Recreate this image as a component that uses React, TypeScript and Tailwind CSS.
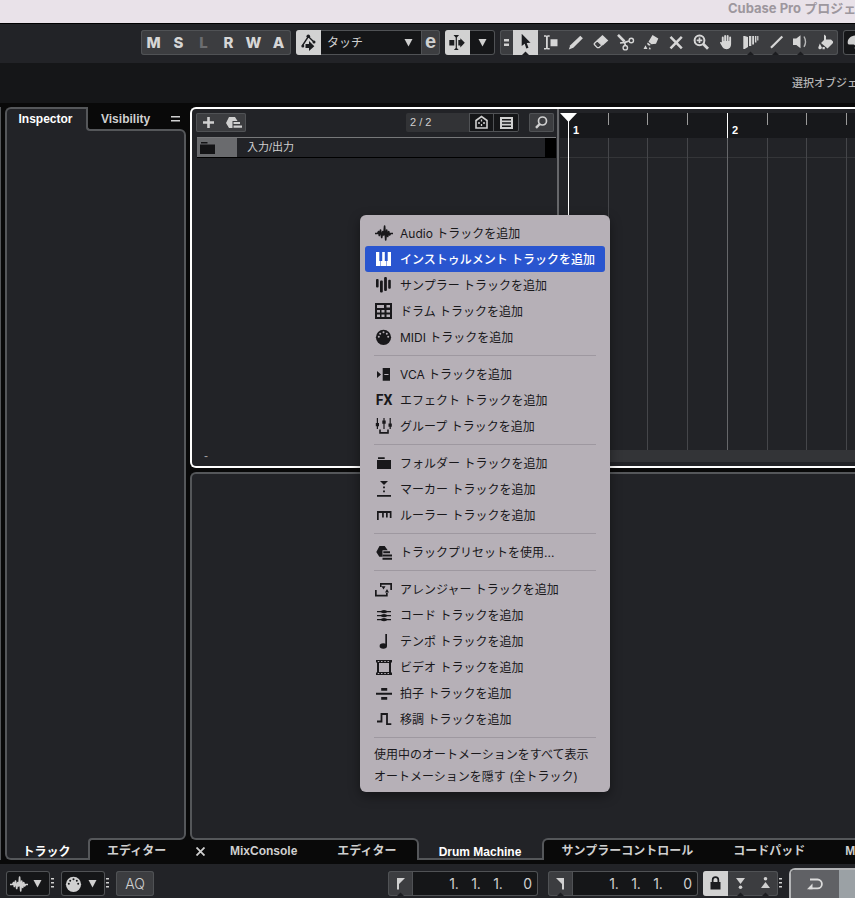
import { ReactNode, useState } from "react";
import clsx from "clsx";

type IconProps = { children: ReactNode; className?: string };

// 25px square glyph used on the tool bars
function ToolIcon({ children, className }: IconProps) {
  return (
    <svg viewBox="0 0 25 25" className={clsx("h-[25px] w-[25px] shrink-0", className)} fill="currentColor" aria-hidden="true">
      {children}
    </svg>
  );
}

// 20x18 glyph used in the context menu
function MenuIcon({ children }: IconProps) {
  return (
    <svg viewBox="0 0 20 18" className="h-[18px] w-5 shrink-0" fill="currentColor" aria-hidden="true">
      {children}
    </svg>
  );
}

function Caret() {
  return (
    <svg viewBox="0 0 9 9" className="h-[9px] w-[9px] shrink-0 pointer-events-none" fill="currentColor" aria-hidden="true">
      <path d="M.5 1h8L4.5 8.500z" />
    </svg>
  );
}

function Handle() {
  return (
    <svg viewBox="0 0 11 25" className="h-[25px] w-[11px] shrink-0 text-[#d0d0d0]" fill="currentColor" aria-hidden="true">
      <path d="M1 7h3v1.500H1zM1 11h3v1.500H1zM1 15h3v1.500H1z" />
    </svg>
  );
}

function Wave() {
  return (
    <path
      d="M1 9.500H3.500L4.500 7.500 5.300 11.500 6.500 6 7.700 13.500 8.800 7.500 9.700 11 10.600 2 11.700 16 12.700 6 13.700 12.500 14.700 7.500 15.600 11 16.500 9.500H19"
      fill="none"
      stroke="currentColor"
      strokeWidth="1.600"
      strokeLinejoin="round"
    />
  );
}

const NOTCH = <path d="M12.500 21.500 16 25H9z" className="text-[#1c1d20]" />;

const TOOLS: { name: string; icon: ReactNode }[] = [
  { name: "Object Selection", icon: <><path d="M8.700 3.700V16l3-2.300 1.600 4.800 2.200-.8-1.800-4.600 3.800-.4z" />{NOTCH}</> },
  { name: "Range Selection", icon: <path d="M6 5.300h2.200l.7.600.7-.6h2.100v1.500H9.800v11.200h1.900v1.600H9.600l-.7-.6-.7.600H6V18h2V6.800H6zM12.500 9.300h7v7h-7z" /> },
  { name: "Draw", icon: <path d="M17.300 5.800 19.900 8.200 10.300 17.800 5.800 19.500 7.300 15.300z" /> },
  { name: "Erase", icon: <><path d="M14.500 5 20.300 10.500 14.800 15.500 9 10z" /><path d="M9.300 10.700 13.800 15 11 17.700H9.300L6.300 14.500V13.500z" fill="none" stroke="currentColor" strokeWidth="1.300" /></> },
  { name: "Split", icon: <g fill="none" stroke="currentColor"><path d="M5 4.800 11.500 11.500" strokeWidth="2.600" /><path d="M7 13 12 12.300 16 11M11.500 11.500 12.300 15.500" strokeWidth="1.700" /><circle cx="18.300" cy="10.500" r="2.200" strokeWidth="1.400" /><circle cx="12.300" cy="17.700" r="2.200" strokeWidth="1.400" /></g> },
  { name: "Glue", icon: <path d="M14.500 5 20.300 8.500 18 13.800 13.500 14.300 10.500 11.800zM9.800 12.500 12.800 15 11 15.800 9 14zM7.500 15.200l2 3.800h-4zM11.800 17l1.200 2.300h-2.400z" /> },
  { name: "Mute", icon: <path d="M7.500 6.800 18.800 18.300M18.800 6.800 7.500 18.300" fill="none" stroke="currentColor" strokeWidth="2.500" /> },
  { name: "Zoom", icon: <g fill="none" stroke="currentColor"><circle cx="11.500" cy="10.300" r="4.900" strokeWidth="2" /><path d="M11.500 7.500v5.600M8.700 10.300h5.600" strokeWidth="1.700" /><path d="M15 13.800 20 18.800" strokeWidth="2.900" /></g> },
  { name: "Hand", icon: <path d="M8.800 7.500a.9.900 0 0 1 1.900 0V11h.5V5.700a1 1 0 0 1 1.900 0V11h.6V5.700a1 1 0 0 1 1.900 0V11h.6V7.500a.9.900 0 0 1 1.900 0V14c0 3-1.500 5.200-4.500 5.200-3 0-4-1.800-6.500-6.200-.4-.9.800-1.500 1.500-.7l.2.700z" /> },
  { name: "Comp", icon: <><path d="M5.300 6h1.400l3.300 1v10l-3.300 2H5.300zM11 6h2.300v10H11zM14.200 6h1.800v8.500h-1.800zM16.900 6h1.500v6.500h-1.500zM19.200 6h1.200v4.500h-1.200z" />{NOTCH}</> },
  { name: "Line", icon: <><path d="M8 17.800 19.300 6.500" fill="none" stroke="currentColor" strokeWidth="2.200" />{NOTCH}</> },
  { name: "Play", icon: <><path d="M5 8.500h3.300L12.500 5.300v13L8.300 15H5z" /><path d="M16 6.500q3 5.200 0 10.300" fill="none" stroke="currentColor" strokeWidth="1.400" opacity=".8" />{NOTCH}</> },
  { name: "Color", icon: <path d="M11 4.500 13 6v3.500h5l2 2v1.500l-5.500 5.500L8 13l3-3zM6.800 13.500l2.200 4.200q-1 2-2.500 1.500T5.300 17.500zM9.500 17h2.300v2.300H9.500z" /> },
];

const PRESET = <><path d="M5.500 3h5.200l3 4.300H8.500v6.400H5.300L2.300 9z" /><path d="M9.300 8.300H16v1.900H9.300zM8.500 11.500H18v1.900H8.500zM8.500 14.700H18v2H8.500z" /></>;

type Entry = { label: string; icon?: ReactNode };

const MENU: Entry[][] = [
  [
    { label: "Audio トラックを追加", icon: <MenuIcon><Wave /></MenuIcon> },
    { label: "インストゥルメント トラックを追加", icon: <MenuIcon><path d="M2 2h3.300v9h1.200v5H2zM8.200 2h2.600v9H12v5H7v-5h1.200zM17 2h-3.300v9h-1.200v5H17z" /></MenuIcon> },
    { label: "サンプラー トラックを追加", icon: <MenuIcon><rect x="2" y="3" width="2.600" height="8.500" rx="1" /><rect x="6" y="4.500" width="2.800" height="12" rx="1" /><rect x="10.100" y="1" width="2.800" height="14" rx="1" /><rect x="14.200" y="3.700" width="2.600" height="9" rx="1" /></MenuIcon> },
    { label: "ドラム トラックを追加", icon: <MenuIcon><path fillRule="evenodd" d="M1 1h17v16H1zM3 3v3h7V3zM12.500 3v2.500H16V3zM3 8v2.500h3V8zM7.500 8v2.500h3V8zM12.500 8v2.500H16V8zM3 12.500V15h3v-2.500zM7.500 12.500V15h3v-2.500zM12.500 12.500V15H16v-2.500z" /></MenuIcon> },
    { label: "MIDI トラックを追加", icon: <MenuIcon><MidiPlug hole="#b6b0b7" /></MenuIcon> },
  ],
  [
    { label: "VCA トラックを追加", icon: <MenuIcon><path fillRule="evenodd" d="M3 6 7 9.500 3 13zM8.700 3H16v12.700H8.700zM10.300 9v1h4.200V9z" /></MenuIcon> },
    { label: "エフェクト トラックを追加", icon: <span className="w-5 shrink-0 text-center font-[Roboto,sans-serif] text-sm font-bold">FX</span> },
    { label: "グループ トラックを追加", icon: <MenuIcon><path d="M2.800 1h1.200v11H2.800zM9.400 1h1.200v11H9.400zM15.600 1h1.200v11h-1.200zM1.800 6h3.200v3.300H1.800zM8.300 3.500h3.400v3.300H8.300zM14.500 6.500h3.300v3.300h-3.300zM5.200 12.500h1.600V15h6.400v-2.500h1.600v4.200H5.200z" /></MenuIcon> },
  ],
  [
    { label: "フォルダー トラックを追加", icon: <MenuIcon><path d="M4 3.300h6.700V5H4zM3 6h14v9H3z" /></MenuIcon> },
    { label: "マーカー トラックを追加", icon: <MenuIcon><path d="M6 1h8l-4 4zM9.100 6.500h1.800v1.800H9.100zM9.100 10.500h1.800v1.800H9.100zM3 15h14v1.800H3z" /></MenuIcon> },
    { label: "ルーラー トラックを追加", icon: <MenuIcon><path d="M3 5h14.500v7h-1.700V7h-2.100v4.500H12V7H9.800v4.500H8.100V7H4.700v7H3z" /></MenuIcon> },
  ],
  [{ label: "トラックプリセットを使用...", icon: <MenuIcon>{PRESET}</MenuIcon> }],
  [
    { label: "アレンジャー トラックを追加", icon: <MenuIcon><path d="M6 3h12v7h-1.700V4.700H7.500V7H6zM1 10h1.700v4.800H12V13h1.700v3.500H1zM7.500 6.200h4L9.500 9.500zM11 12.500h4L13 9z" /></MenuIcon> },
    { label: "コード トラックを追加", icon: <MenuIcon><path d="M3 5h14v1.200H3zM3 9h14v1.200H3zM3 13h14v1.200H3z" /><ellipse cx="10" cy="5.600" rx="3" ry="1.700" /><ellipse cx="10" cy="9.600" rx="3" ry="1.700" /><ellipse cx="10" cy="13.600" rx="3" ry="1.700" /></MenuIcon> },
    { label: "テンポ トラックを追加", icon: <MenuIcon><path d="M11.300 2H13v12h-1.700z" /><ellipse cx="9.300" cy="14" rx="3.700" ry="2.700" /></MenuIcon> },
    { label: "ビデオ トラックを追加", icon: <MenuIcon><path fillRule="evenodd" d="M2 2h16v15H2zM5 5v9h10V5zM3.800 3v1h1.500V3zM7 3v1h1.500V3zM10.300 3v1h1.500V3zM13.500 3v1H15V3zM3.800 15v1h1.500v-1zM7 15v1h1.500v-1zM10.300 15v1h1.500v-1zM13.500 15v1H15v-1zM2 4.500v10h1v-10zM17 4.500v10h1v-10z" /></MenuIcon> },
    { label: "拍子 トラックを追加", icon: <MenuIcon><path d="M2 8.800h16v1.900H2zM7.200 4h6v2.700h-6zM7.200 13h6v2.700h-6z" /></MenuIcon> },
    { label: "移調 トラックを追加", icon: <MenuIcon><path d="M3 11.500h4.500V4H13v10.200h4.300" fill="none" stroke="currentColor" strokeWidth="1.800" /></MenuIcon> },
  ],
  [{ label: "使用中のオートメーションをすべて表示" }, { label: "オートメーションを隠す (全トラック)" }],
];

function MidiPlug({ hole }: { hole: string }) {
  return (
    <>
      <circle cx="9.500" cy="9.300" r="7.600" />
      <g fill={hole}>
        <circle cx="4.800" cy="8.800" r="1" />
        <circle cx="6.200" cy="5.700" r="1" />
        <circle cx="9.500" cy="4.300" r="1" />
        <circle cx="12.800" cy="5.700" r="1" />
        <circle cx="14.200" cy="8.800" r="1" />
      </g>
    </>
  );
}

const GROUP = "flex h-[25px] shrink-0 overflow-hidden rounded-[3px] inset-ring inset-ring-[#505255]";

export default function App() {
  return (
    <div className="relative flex h-screen min-h-[640px] flex-col overflow-hidden bg-[#090909] font-['Liberation_Sans','Noto_Sans_CJK_JP',sans-serif] text-xs text-[#d0d0d0]">
      <header className="flex h-6 shrink-0 justify-end overflow-hidden border-b border-black bg-[#e9e2e9]">
        <h1 className="w-[127px] shrink-0 whitespace-nowrap font-[Inter,'Noto_Sans_CJK_JP',sans-serif] text-[13px] leading-4 font-bold text-[#9d979e]">
          Cubase Pro プロジェクト
        </h1>
      </header>
      <Toolbar />
      <div className="flex h-10 shrink-0 items-center justify-end overflow-hidden bg-[#151618]">
        <span className="w-[63px] shrink-0 whitespace-nowrap text-[11px] font-medium text-[#b4b4b4]">選択オブジェクト</span>
      </div>
      <main className="flex min-h-0 flex-1 py-1">
        <div className="mr-1 w-px shrink-0 bg-[#55575a]" />
        <Inspector />
        <div className="flex min-w-0 flex-1 flex-col gap-1">
          <Project />
          <LowerZone />
        </div>
      </main>
      <Transport />
      <TrackMenu />
    </div>
  );
}

function Toolbar() {
  const [tool, setTool] = useState(TOOLS[0].name);
  return (
    <div className="flex h-[39px] shrink-0 items-start gap-[5px] overflow-hidden bg-[#222327] pt-1.5 pl-[141px]">
      <div className={clsx(GROUP, "bg-[#3c3d40]")}>
        {["M", "S", "L", "R", "W", "A"].map((c) => (
          <button key={c} className={clsx("w-[25px] text-center font-[Inter,sans-serif] text-[15px] font-extrabold", c === "L" ? "text-[#6c6d70]" : "text-[#d6d6d6]")}>
            {c}
          </button>
        ))}
      </div>
      <div className={clsx(GROUP, "bg-[#151618]")}>
        <button aria-label="Automation" className="bg-[#d2d2d2] text-[#1c1d20]">
          <ToolIcon>
            <path d="M6.500 15.500 12.300 6.500 18 12" fill="none" stroke="currentColor" strokeWidth="1.400" />
            <circle cx="12.300" cy="6.300" r="1.800" />
            <circle cx="18" cy="12" r="1.500" />
            <circle cx="6.800" cy="16" r="1.500" />
            <path d="M9.500 14h3.500v-3l5.300 5.200L13 21v-3H9.500z" />
          </ToolIcon>
        </button>
        <div className="relative flex w-[100px] items-center justify-end pr-2">
          <select aria-label="オートメーションモード" className="absolute inset-0 w-full appearance-none pl-1.5 text-xs text-[#d0d0d0] outline-none">
            <option>タッチ</option>
          </select>
          <Caret />
        </div>
        <button aria-label="Automation panel" className="w-[19px] rounded-r-[3px] bg-[#3c3d40] pb-1 text-xl leading-5 font-bold inset-ring inset-ring-[#505255]">e</button>
      </div>
      <div className={clsx(GROUP, "bg-[#151618]")}>
        <button aria-label="Auto-scroll" className="bg-[#d2d2d2] text-[#1c1d20]">
          <ToolIcon>
            <path d="M4.300 10h5v5.500h-5zM8.500 5h5.600l-2.200 2.500V18l1.800 2H8.900l1.800-2V7.500zM13.300 10h2V8.200l4.500 4.600-4.500 4.600v-1.900h-2z" />
          </ToolIcon>
        </button>
        <button aria-label="Auto-scroll settings" className="grid w-[25px] place-items-center"><Caret /></button>
      </div>
      <div className={clsx(GROUP, "bg-[#3c3d40]")} role="toolbar" aria-label="Tools">
        <svg viewBox="0 0 13 25" className="h-[25px] w-[13px]" fill="currentColor" aria-hidden="true">
          <path d="M4 9h5v2.500H4zM4 13.500h5V16H4z" />
        </svg>
        {TOOLS.map((t) => (
          <button key={t.name} aria-label={t.name} onClick={() => setTool(t.name)} className={t.name === tool ? "bg-[#d2d2d2] text-[#1c1d20]" : "text-[#d6d6d6]"}>
            <ToolIcon>{t.icon}</ToolIcon>
          </button>
        ))}
      </div>
      <div className={clsx(GROUP, "bg-[#151618]")}>
        <button aria-label="Color menu">
          <ToolIcon>
            <path d="M12.500 5.500c4.500 0 8 3 8 7s-3 7-7 7c-2 0-2-1.500-1.500-2.700.5-1.500-.5-2.300-2-2.300H6c-1 0-1.300-.8-1.300-2 0-4 3.300-7 7.800-7z" />
          </ToolIcon>
        </button>
      </div>
    </div>
  );
}

function Inspector() {
  return (
    <aside className="mr-1 flex w-[181px] shrink-0 flex-col font-bold">
      <div className="flex h-6 shrink-0" role="tablist">
        <button role="tab" aria-selected="true" className="relative z-10 -mr-1 w-[85px] rounded-tl-md border-t-2 border-l-2 border-[#55575a] bg-[#222327] pr-1.5 pb-0.5 text-white">Inspector</button>
        <div className="relative z-20 mr-1.5 flex flex-1 items-center rounded-bl border-b-2 border-l-2 border-[#55575a] bg-[#090909] pl-[13px]">
          <button role="tab" aria-selected="false" className="pt-0.5">Visibility</button>
          <svg viewBox="0 0 9 9" className="ml-auto h-[9px] w-[9px]" fill="currentColor" aria-hidden="true"><path d="M0 2h9v1.500H0zM0 6h9v1.500H0z" /></svg>
        </div>
      </div>
      <div className="-mt-0.5 flex-1 rounded-r-md border-2 border-[#55575a] bg-[#222327]" />
      <div className="-mt-0.5 flex h-[22px] shrink-0" role="tablist">
        <button role="tab" aria-selected="true" className="relative z-10 -mr-1 w-[87px] rounded-bl-md border-b-2 border-l-2 border-[#55575a] bg-[#222327] pt-1.5 pr-1.5 text-white">トラック</button>
        <div className="relative z-20 mr-1.5 flex flex-1 items-center rounded-tl border-t-2 border-l-2 border-[#55575a] bg-[#090909] pl-[17px]">
          <button role="tab" aria-selected="false" className="pt-0.5">エディター</button>
        </div>
      </div>
    </aside>
  );
}

// beats of the ruler; the first one of a bar carries its number
const BEATS = [
  { bar: "1", width: "w-10" },
  { width: "w-[39px]" },
  { width: "w-10" },
  { width: "w-10" },
  { bar: "2", width: "w-10" },
  { width: "w-[39px]" },
  { width: "w-10" },
  { width: "w-10" },
];

function Project() {
  return (
    <section className="flex min-h-0 flex-[357] overflow-hidden rounded-l-md border-2 border-r-0 border-white bg-[#222327]">
      <div className="flex w-[367px] shrink-0 flex-col border-r-2 border-[#66676a]">
        <div className="flex h-7 shrink-0 items-start pt-1 pr-[3px] pl-1">
          <div className="flex h-[19px] rounded-xs bg-[#3c3d40] inset-ring inset-ring-[#505255]">
            <button aria-label="トラックを追加">
              <svg viewBox="0 0 25 19" className="h-[19px] w-[25px]" fill="currentColor"><path d="M11.200 4h2.600v4.200H18v2.600h-4.200V15h-2.600v-4.200H7V8.200h4.200z" /></svg>
            </button>
            <button aria-label="トラックプリセットを使用">
              <svg viewBox="0 0 25 19" className="h-[19px] w-[25px]" fill="currentColor"><path d="M8 4h6l2.500 4h-5v7H8L5 10zM12.500 9H19v2h-6.500zM12.500 12.500H21v2.300h-8.500z" /></svg>
            </button>
          </div>
          <span className="ml-auto h-[19px] w-[63px] rounded-l-xs bg-[#323336] pl-1 text-[11px] leading-[19px]">2 / 2</span>
          <div className="flex h-[19px] bg-[#151618]">
            <button aria-label="表示設定" className="inset-ring inset-ring-[#505255]">
              <svg viewBox="0 0 25 19" className="h-[19px] w-[25px]" fill="none" stroke="currentColor">
                <path d="M7 15V7.500L12.500 3.500 18 7.500V15z" strokeWidth="1.600" />
                <path d="M12.500 6.500v2M12.500 11v2M9 10h2M14 10h2" strokeWidth="1.300" />
              </svg>
            </button>
            <button aria-label="区分" className="-ml-px rounded-r-xs inset-ring inset-ring-[#505255]">
              <svg viewBox="0 0 26 19" className="h-[19px] w-[26px]" fill="currentColor"><path fillRule="evenodd" d="M7 4h13v12H7zM9 6v1.500h9V6zM9 9.200v1.500h9V9.200zM9 12.500V14h9v-1.500z" /></svg>
            </button>
          </div>
          <button aria-label="検索" className="ml-2.5 rounded-xs bg-[#3c3d40] inset-ring inset-ring-[#505255]">
            <svg viewBox="0 0 25 19" className="h-[19px] w-[25px]" fill="none" stroke="currentColor"><circle cx="13.500" cy="8" r="4" strokeWidth="1.700" /><path d="M10.700 11 7 14.800" strokeWidth="2.500" /></svg>
          </button>
        </div>
        <div className="mr-px ml-[5px] flex h-[21px] shrink-0 items-stretch border-t border-b border-t-[#77787a] border-b-black">
          <div className="flex w-10 items-center bg-[#6a6b6e] pl-[3px] text-[#141416]">
            <svg viewBox="0 0 15 12" className="h-3 w-[15px]" fill="currentColor" aria-hidden="true"><path d="M1 0h6.500v1.500H1zM0 2.500h15V12H0z" /></svg>
          </div>
          <span className="pl-2.5 text-[11px] leading-[18px]">入力/出力</span>
          <div className="ml-auto w-[11px] bg-black" />
        </div>
        <button aria-label="行の高さ" className="mt-auto mb-1 ml-2.5 h-3 w-2 leading-3 text-[#a0a0a0]">-</button>
      </div>
      <Timeline />
    </section>
  );
}

function Timeline() {
  return (
    <div className="ml-px flex min-w-0 flex-1 flex-col overflow-hidden pt-1">
      <div className="flex min-h-0 flex-1 overflow-hidden">
        <div className="flex w-2 shrink-0 flex-col">
          <div className="h-[25px] bg-[#17181b]" />
          <div className="h-5 border-b border-[#343538]" />
        </div>
        {BEATS.map((b, i) => (
          <div key={i} className={clsx("relative flex shrink-0 flex-col", b.width)}>
            <div className="h-[25px] shrink-0 bg-[#17181b]">
              <div className={clsx("border-l pt-3 pl-1 text-[11px] leading-[11px] font-bold text-white", b.bar ? "h-[25px] border-white" : "h-[9px] border-[#9a9a9a]")}>{b.bar}</div>
            </div>
            <div className={clsx("flex-1 border-l", i === 0 ? "border-white" : b.bar ? "border-[#66676a]" : "border-[#45464a]")}>
              <div className="h-5 border-b border-[#343538]" />
            </div>
            {i === 0 && (
              <svg viewBox="0 0 17 9" className="absolute top-0 -left-2 h-[9px] w-[17px] fill-white" aria-hidden="true"><path d="M0 0h17L8.500 9z" /></svg>
            )}
          </div>
        ))}
      </div>
      <div className="mb-1 h-3 shrink-0 bg-[#333437]" />
    </div>
  );
}

function LowerZone() {
  return (
    <section className="flex min-h-0 flex-[388] flex-col overflow-hidden font-bold">
      <div className="flex-1 rounded-l-md border-2 border-r-0 border-[#55575a] bg-[#222327]" />
      <div className="-mt-0.5 flex h-[22px] shrink-0 whitespace-nowrap" role="tablist">
        <div className="relative z-10 ml-1.5 flex shrink-0 items-center rounded-tr-md border-t-2 border-r-2 border-[#55575a] bg-[#090909] pt-0.5 pr-5">
          <button aria-label="閉じる" className="mr-[25px]">
            <svg viewBox="0 0 9 9" className="h-[9px] w-[9px]" fill="none" stroke="currentColor" strokeWidth="1.800"><path d="M.5.5 8.500 8.500M8.500.5.5 8.500" /></svg>
          </button>
          <button role="tab" aria-selected="false" className="mr-10">MixConsole</button>
          <button role="tab" aria-selected="false">エディター</button>
        </div>
        <button role="tab" aria-selected="true" className="-mx-1.5 w-[135px] shrink-0 border-b-2 border-[#55575a] bg-[#222327] pt-1.5 text-white">Drum Machine</button>
        <div className="relative z-10 flex flex-1 items-center gap-10 overflow-hidden rounded-tl-md border-t-2 border-l-2 border-[#55575a] bg-[#090909] pt-0.5 pl-[18px]">
          <button role="tab" aria-selected="false" className="shrink-0">サンプラーコントロール</button>
          <button role="tab" aria-selected="false" className="shrink-0">コードパッド</button>
          <button role="tab" aria-selected="false" className="shrink-0">MIDI リモート</button>
        </div>
      </div>
    </section>
  );
}

function Locator({ label, flag }: { label: string; flag: string }) {
  return (
    <div className={clsx(GROUP, "bg-[#151618]")}>
      <button aria-label={label} className="rounded-l-[3px] bg-[#3c3d40] inset-ring inset-ring-[#505255]">
        <ToolIcon><path d={flag} />{NOTCH}</ToolIcon>
      </button>
      <div className="flex w-[125px] items-center justify-end pr-1.5 font-[Inter,sans-serif] text-sm">
        {["1.", "1.", "1."].map((v, i) => <span key={i} className="w-[22px]">{v}</span>)}
        <span className="ml-2">0</span>
      </div>
    </div>
  );
}

function Transport() {
  return (
    <footer className="flex h-[34px] shrink-0 items-start overflow-hidden bg-[#222327] pt-[7px] pl-1.5">
      <div className={clsx(GROUP, "w-11 items-center bg-[#151618] pl-[3px]")}>
        <MenuIcon><Wave /></MenuIcon>
        <button aria-label="Audio performance" className="ml-1"><Caret /></button>
      </div>
      <Handle />
      <div className={clsx(GROUP, "w-11 items-center bg-[#151618] pl-[3px]")}>
        <MenuIcon><MidiPlug hole="#151618" /></MenuIcon>
        <button aria-label="MIDI input" className="ml-1"><Caret /></button>
      </div>
      <Handle />
      <button className={clsx(GROUP, "w-[38px] items-center justify-center bg-[#3c3d40] font-[Inter,sans-serif] text-sm font-light")}>AQ</button>
      <div className="ml-[234px] flex shrink-0 gap-2.5">
        <Locator label="左ロケーター" flag="M9 7h8l-6 6v5.500H9z" />
        <Locator label="右ロケーター" flag="M16 7H8l6 6v5.500h2z" />
      </div>
      <div className={clsx(GROUP, "ml-[5px] bg-[#3c3d40]")}>
        <button aria-label="ロック" className="bg-[#d2d2d2] text-[#1c1d20]">
          <ToolIcon><path fillRule="evenodd" d="M7.500 11h1.300V9a3.700 3.700 0 0 1 7.400 0v2h1.300v7.500h-10zM10.500 11h4V9a2 2 0 0 0-4 0z" /></ToolIcon>
        </button>
        <button aria-label="パンチイン"><ToolIcon><path d="M8 7h9l-4.500 6z" /><circle cx="12.500" cy="16.300" r="1.800" />{NOTCH}</ToolIcon></button>
        <button aria-label="パンチアウト"><ToolIcon><path d="M8 17h9l-4.500-6z" /><circle cx="12.500" cy="7.700" r="1.800" />{NOTCH}</ToolIcon></button>
      </div>
      <Handle />
      <div className="-mt-[3px] flex h-10 min-w-[66px] flex-1 overflow-hidden rounded-tl-md border-t-2 border-l-2 border-[#b4b5b7]">
        <button aria-label="サイクル" className="h-[30px] w-12 shrink-0 bg-[#606165]">
          <svg viewBox="0 0 48 30" className="h-[30px] w-12" fill="none" stroke="#dcdcdc" strokeWidth="1.800"><path d="M19 9.500h7.500a4.300 4.300 0 0 1 0 8.800H18" /><path d="M16 19.200 21.500 13.500v5.700z" fill="#dcdcdc" stroke="none" /></svg>
        </button>
        <div className="flex-1 bg-[#9ba1a5]" />
      </div>
    </footer>
  );
}

function TrackMenu() {
  const [active, setActive] = useState("インストゥルメント トラックを追加");
  return (
    <div role="menu" className="absolute top-[215px] left-[360px] z-50 w-[250px] rounded-md bg-[#b6b0b7] p-[5px] font-[Inter,'Noto_Sans_CJK_JP',sans-serif] text-[#19181b] shadow-[0_4px_12px_rgba(0,0,0,0.4)]">
      {MENU.map((group, i) => (
        <div key={i} role="group">
          {i > 0 && <hr className="mx-[9px] my-[5px] border-t border-[#9e98a0]" />}
          {group.map((item) => (
            <button
              key={item.label}
              role="menuitem"
              onMouseEnter={() => setActive(item.label)}
              className={clsx(
                "flex w-full items-center gap-1.5 rounded-[3px] px-[9px] whitespace-nowrap",
                item.icon ? "h-[26px]" : "h-[22px]",
                item.label === active && "bg-[#2955cf] font-medium text-white"
              )}
            >
              {item.icon}
              <span className="pt-0.5">{item.label}</span>
            </button>
          ))}
        </div>
      ))}
    </div>
  );
}
